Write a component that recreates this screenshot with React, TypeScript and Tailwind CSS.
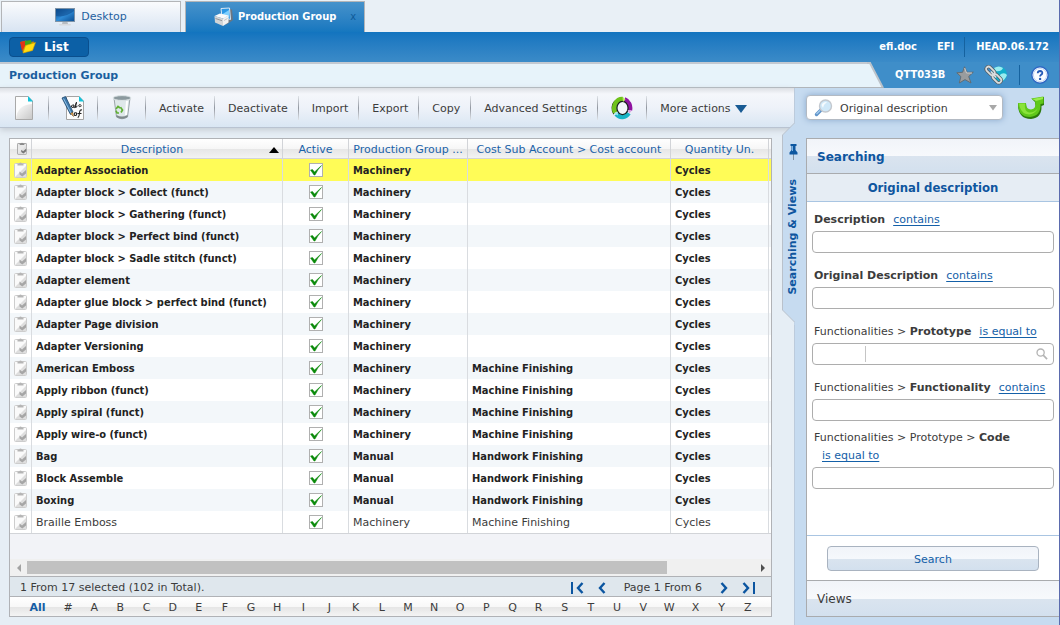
import React from "react";

type Row = { name: string; group: string; account?: string; plain?: boolean };

const rows: Row[] = [
  { name: "Adapter Association", group: "Machinery" },
  { name: "Adapter block > Collect (funct)", group: "Machinery" },
  { name: "Adapter block > Gathering (funct)", group: "Machinery" },
  { name: "Adapter block > Perfect bind (funct)", group: "Machinery" },
  { name: "Adapter block > Sadle stitch (funct)", group: "Machinery" },
  { name: "Adapter element", group: "Machinery" },
  { name: "Adapter glue block > perfect bind (funct)", group: "Machinery" },
  { name: "Adapter Page division", group: "Machinery" },
  { name: "Adapter Versioning", group: "Machinery" },
  { name: "American Emboss", group: "Machinery", account: "Machine Finishing" },
  { name: "Apply ribbon (funct)", group: "Machinery", account: "Machine Finishing" },
  { name: "Apply spiral (funct)", group: "Machinery", account: "Machine Finishing" },
  { name: "Apply wire-o (funct)", group: "Machinery", account: "Machine Finishing" },
  { name: "Bag", group: "Manual", account: "Handwork Finishing" },
  { name: "Block Assemble", group: "Manual", account: "Handwork Finishing" },
  { name: "Boxing", group: "Manual", account: "Handwork Finishing" },
  { name: "Braille Emboss", group: "Machinery", account: "Machine Finishing", plain: true },
];

const letters = "#ABCDEFGHIJKLMNOPQRSTUVWXYZ".split("");

const compact = "font-['DejaVu_Sans_Condensed','Noto_Sans',sans-serif] font-bold";

function MonitorIcon() {
  return (
    <svg width="20" height="18" viewBox="0 0 20 18" aria-hidden="true">
      <defs>
        <linearGradient id="screen" x1="0" y1="0" x2="1" y2="1">
          <stop offset="0" stopColor="#0a4a8c" />
          <stop offset="0.5" stopColor="#2f8bd6" />
          <stop offset="1" stopColor="#0b4d92" />
        </linearGradient>
      </defs>
      <rect x="0.5" y="0.5" width="19" height="13" fill="url(#screen)" stroke="#7d93a8" />
      <path d="M1 8Q10 10 19 3V1H1Z" fill="#0d4788" opacity=".55" />
      <path d="M7.500 14h5l.5 2H7Z" fill="#b7bcc2" />
      <rect x="4" y="16" width="12" height="1.5" rx=".7" fill="#d8dade" />
    </svg>
  );
}

function PrinterIcon() {
  return (
    <svg width="20" height="20" viewBox="0 0 20 20" aria-hidden="true">
      <path d="M14 2L18 2.500L19 13L12 18L13 12Z" fill="#6c7681" />
      <path d="M7 1.500L15.500 1L16.500 12.500L8 10Z" fill="#2c98e6" stroke="#d9e8f4" />
      <path d="M8 7.500L15 3V10.500L9 9Z" fill="#7fd0ff" />
      <path d="M.5 9L6 6.500L14.500 8.500L9 11.500Z" fill="#fafafa" />
      <path d="M.5 9L9 11.500V19L1 15.500Z" fill="#d2d4d6" />
      <path d="M9 11.500L14.500 8.500V15.500L9 19Z" fill="#f1f1f1" />
      <path d="M1.500 11.500L8 13.700" stroke="#8d9194" strokeWidth=".9" />
      <path d="M10 13.500L13.500 11.500" stroke="#b5b8ba" strokeWidth=".8" />
    </svg>
  );
}

function FolderIcon() {
  return (
    <svg width="16" height="14" viewBox="0 0 16 14" aria-hidden="true">
      <path d="M0.500 2L6 0.500L7.500 2.500L14 1.500L13 10L3 13Z" fill="#c98906" />
      <path d="M0 2L5 1V6L2 11Z" fill="#e03316" />
      <path d="M5 1L11 0L12 5L5 7Z" fill="#3fa51d" />
      <path d="M3 13L5.500 5.500L15.500 2.500L12.500 10.500Z" fill="#ffdf12" stroke="#d79f00" strokeWidth=".6" />
    </svg>
  );
}

function NewDocIcon() {
  return (
    <svg width="20" height="26" viewBox="0 0 20 26" aria-hidden="true">
      <defs>
        <linearGradient id="sheet" x1="0" y1="0" x2="1" y2="1">
          <stop offset="0.2" stopColor="#f4f4f4" />
          <stop offset="1" stopColor="#c8c8c8" />
        </linearGradient>
      </defs>
      <path d="M1.500 1.500H14L18.500 6V24.500H1.500Z" fill="#fdfdfd" stroke="#a9a9a9" />
      <path d="M2 24Q3 10 18 9V24Z" fill="url(#sheet)" />
      <path d="M14 1V6.500H19Z" fill="#12c3da" />
    </svg>
  );
}

function EditDocIcon() {
  return (
    <svg width="24" height="26" viewBox="0 0 24 26" aria-hidden="true">
      <path d="M5.500 1.500H18L22.500 6V24.500H5.500Z" fill="#fcfcfc" stroke="#a4a4a4" />
      <path d="M18 1V6.500H23Z" fill="#12c3da" />
      <path d="M12 12.500q-2 0-1.500-1.500t2.500-1l-.5 2.500 1 .2 2-5.500-1.200 5.300q2 0 1.700-1.800m3.700-1q-2-.5-2 1.200t3-.2" fill="none" stroke="#222" strokeWidth="1" />
      <path d="M14.500 20.500q-1.500 0-1.200-1.600t2.200-1q.5 2.500-1 2.600m2.300 2.200q1.500-1 1.700-4.700t2.500-3m-4.500 3.500h4" fill="none" stroke="#222" strokeWidth="1.100" />
      <path d="M1 3L4.500 1.500L12 17L9.500 19.500Z" fill="#3f79ab" stroke="#1c466f" strokeWidth=".8" />
      <path d="M2.500 3.500L10 18" stroke="#8fc0e5" strokeWidth="1" />
      <path d="M9.500 18.500L11.700 17.200L12.500 21.500Z" fill="#e0a757" stroke="#704713" strokeWidth=".5" />
    </svg>
  );
}

function BinIcon() {
  return (
    <svg width="20" height="25" viewBox="0 0 20 25" aria-hidden="true">
      <path d="M2 3L4.500 22Q10 25.500 15.500 22L18 3Z" fill="#dfe8ea" stroke="#9aa5a9" />
      <path d="M4.500 20Q10 23 15.500 20V22Q10 25.500 4.500 22Z" fill="#7f898c" />
      <path d="M15 6L14 20" stroke="#fff" strokeWidth="2" />
      <ellipse cx="10" cy="3" rx="9" ry="2.400" fill="#8b999e" stroke="#dfe6e8" />
      <path d="M4 14L6 11.500L8 13M8.500 12.300L10.500 15L9 17.500M7 18H5L4 15.700" fill="none" stroke="#5fb034" strokeWidth="1.700" />
    </svg>
  );
}

function RingIcon() {
  return (
    <svg width="22" height="24" viewBox="0 0 22 24" aria-hidden="true">
      <path d="M3 18A9 10 0 0 1 4 5" stroke="#1d2a12" strokeWidth="1.500" fill="none" />
      <g fill="none" strokeWidth="4.800">
        <path d="M4.300 16.500A8 9 0 0 1 12 3.300" stroke="#6fc21a" />
        <path d="M13.500 3.600A8 9 0 0 1 18.700 14.500" stroke="#8f12a0" />
        <path d="M17.600 17A8 9 0 0 1 5.300 18" stroke="#18b4c6" />
      </g>
      <ellipse cx="11.500" cy="12" rx="5.600" ry="6.600" fill="#f3f6fb" stroke="#16201c" strokeWidth="1.300" />
      <path d="M11.500 1L14.500 3.500L12 6Z" fill="#b9ec62" />
      <path d="M16.500 14.200L21 14L18.500 17.500Z" fill="#d9a4e0" />
      <path d="M3 17.500L6.500 15.500L7 19.500Z" fill="#a3eaf2" />
    </svg>
  );
}

function StarIcon() {
  return (
    <svg width="18" height="18" viewBox="0 0 18 18" aria-hidden="true">
      <path d="M8.500 .8L11 6.300L17.300 6.200L12.700 10.500L15 17L9 13.600L3.300 17L4.900 10.600L.8 6.800L6.600 6.300Z" fill="#999c9e" stroke="#62696d" strokeWidth=".9" />
      <path d="M8.700 2L10.500 7L16 7" stroke="#c9cbcc" fill="none" />
    </svg>
  );
}

function LinkGlobeIcon() {
  return (
    <svg width="24" height="20" viewBox="0 0 24 20" aria-hidden="true">
      <circle cx="15" cy="9.500" r="8" fill="#12aecb" />
      <path d="M10 3Q15 0 19 3Q17 7 12 6ZM17 9Q21 7 23 10Q21 15 18 16Q18 12 15 11Z" fill="#9aecf0" />
      <g fill="none" stroke="#555d62" strokeWidth="3.200">
        <rect x="1.500" y="3" width="10" height="5" rx="2.500" transform="rotate(45 6 5.500)" />
        <rect x="8" y="11" width="10" height="5" rx="2.500" transform="rotate(45 13 13.500)" />
      </g>
      <g fill="none" stroke="#d9dddf" strokeWidth="1.800">
        <rect x="1.500" y="3" width="10" height="5" rx="2.500" transform="rotate(45 6 5.500)" />
        <rect x="8" y="11" width="10" height="5" rx="2.500" transform="rotate(45 13 13.500)" />
        <path d="M7 6.500L12 12.500" />
      </g>
    </svg>
  );
}

function HelpIcon() {
  return (
    <svg width="18" height="18" viewBox="0 0 18 18" aria-hidden="true">
      <circle cx="9" cy="9" r="8.200" fill="#fafcff" stroke="#2e66c4" strokeWidth="1.400" />
      <circle cx="9" cy="9" r="6.600" fill="#fafcff" stroke="#b9cdee" strokeWidth=".8" />
      <path d="M6.700 7.300Q6.800 5 9.100 5Q11.500 5.100 11.300 7.100Q11.200 8.200 9.900 8.900Q9.100 9.400 9.100 10.600" fill="none" stroke="#2458b5" strokeWidth="1.800" />
      <circle cx="9.100" cy="12.900" r="1.200" fill="#2458b5" />
    </svg>
  );
}

function RefreshIcon() {
  return (
    <svg width="28" height="25" viewBox="0 0 28 25" aria-hidden="true">
      <path d="M1 9Q1 24 14 24Q25 23 24.500 11L27 10V2L15 4L18 7Q20 15 14 16Q9 16 9 9Z" fill="#2c7b0c" />
      <path d="M1 8Q1 22 13 22Q24 21 23.500 9L26.500 8.500V1.500L14 3.500L18 6Q20 14 14 14.500Q9 14.500 9 8Z" fill="#5fc81a" />
      <path d="M2 8.500Q3 17 9 19Q17 21 21 13Q17 18 12 17.500Q7 16 8 8.500Z" fill="#8ae33a" />
      <path d="M15.500 4L26 2V4L19 6Z" fill="#9aec4b" />
    </svg>
  );
}

function LensIcon() {
  return (
    <svg width="19" height="18" viewBox="0 0 19 18" aria-hidden="true">
      <path d="M2.500 15.500L7 11" stroke="#5f93c9" strokeWidth="3.400" strokeLinecap="round" />
      <path d="M2.500 15L6 11.500" stroke="#a6cdee" strokeWidth="1.200" />
      <circle cx="11.500" cy="7" r="6" fill="#cfe8f8" stroke="#c3c8ce" strokeWidth="1.400" />
      <path d="M7.500 6Q9 2.500 13 3Q10 5 9 9Z" fill="#fff" opacity=".8" />
    </svg>
  );
}

function ClipIcon({ small }: { small?: boolean }) {
  return (
    <svg width={small ? 10 : 13} height={small ? 13 : 16} viewBox="0 0 13 16" className="mx-auto block" aria-hidden="true">
      <rect x=".5" y="1.500" width="12" height="14" rx="1" fill={small ? "#e9e9e9" : "#fafafa"} stroke={small ? "#8f8f8f" : "#cdcdcd"} />
      <path d="M1 15L12 4V15Z" fill="#dedede" />
      <path d="M3.500 3.500V1.500H5Q6.500-.5 8 1.500H9.500V3.500Z" fill={small ? "#8a8a8a" : "#b5b5b5"} />
      <path d="M5.500 9.500L8 11.500L12 8V11.500L8.300 14.500L5.500 12.500Z" fill={small ? "#777" : "#a6a6a6"} />
    </svg>
  );
}

function PinIcon() {
  return (
    <svg width="9" height="18" viewBox="0 0 9 18" aria-hidden="true">
      <path d="M4.500 11V17" stroke="#8594a3" />
      <path d="M1.500 1H7.500V3H6.500V7L8.500 9.500V11.500H.5V9.500L2.500 7V3H1.500Z" fill="#0d57a0" />
      <path d="M3.500 3V8" stroke="#7fb4e2" />
    </svg>
  );
}

function PageIcon({ dir, bar }: { dir: "prev" | "next"; bar?: boolean }) {
  return (
    <svg width="14" height="12" viewBox="0 0 14 12" className={dir === "next" ? "rotate-180" : ""} aria-hidden="true">
      {bar && <path d="M2 0V12" stroke="#0b55a0" strokeWidth="2" />}
      <path d="M12.500 1L8 6L12.500 11" fill="none" stroke="#0b55a0" strokeWidth="2.400" />
    </svg>
  );
}

function ToolButton({ children }: { children: React.ReactNode }) {
  return (
    <>
      <button type="button" className="h-6 whitespace-nowrap pt-0.5 pr-2.5 pl-[13px]">{children}</button>
      <Divider />
    </>
  );
}

function Divider() {
  return <span className="h-6 w-px bg-[linear-gradient(#dfe3e8,#9297a0_50%,#dfe3e8)]" />;
}

function Field({ id, path, name, op, lookup }: { id: string; path?: string; name: string; op: string; lookup?: boolean }) {
  return (
    <div>
      <div className="mb-0.5 flex flex-wrap gap-x-2 pt-px pl-0.5 leading-[18px]">
        <label htmlFor={id}>
          {path && <span>{path} &gt; </span>}
          <b>{name}</b>
        </label>
        <a href="#operator" className="text-[#1460a8] underline underline-offset-2">{op}</a>
      </div>
      {lookup ? (
        <div className="flex h-[22px] items-center rounded border border-[#adadad] bg-white pr-[5px]">
          <input id={id} className="h-4 w-[53px] border-r border-[#c5c5c5] px-1 outline-none" />
          <input aria-label={name + " name"} className="h-4 min-w-0 flex-1 px-1 outline-none" />
          <button type="button" aria-label="Look up">
            <svg width="12" height="12" viewBox="0 0 13 13" aria-hidden="true">
              <circle cx="5" cy="5" r="3.900" fill="none" stroke="#b4b4b4" strokeWidth="1.400" />
              <path d="M7.800 7.800L12 12" stroke="#b4b4b4" strokeWidth="1.800" />
            </svg>
          </button>
        </div>
      ) : (
        <input id={id} className="block h-[22px] w-full rounded border border-[#adadad] bg-white px-1 outline-none" />
      )}
    </div>
  );
}

function RowTable() {
  const head = "h-5 truncate border-r border-b border-[#d2d4d8] px-[3px] pt-0.5 pb-0 text-center leading-[17px] font-normal text-[#1a62a8]";
  const cell = "h-[22px] truncate border-r border-[#d9dce0] px-1 pt-0.5 pb-0";
  return (
    <table className="w-full table-fixed border-separate border-spacing-0 leading-[18px]">
      <colgroup>
        <col className="w-[22px]" />
        <col />
        <col className="w-[66px]" />
        <col className="w-[119px]" />
        <col className="w-[203px]" />
        <col className="w-[98px]" />
        <col className="w-0.5" />
      </colgroup>
      <thead className="bg-[linear-gradient(#fff,#f6f6f6_50%,#e6e6e6_50%,#f4f4f4)]">
        <tr>
          <th className="h-5 border-r border-b border-[#d2d4d8] p-0 pl-0.5" aria-label="Record"><ClipIcon small /></th>
          <th className={head}>
            <span className="flex items-center">
              <span className="flex-1">Description</span>
              <svg width="10" height="6" viewBox="0 0 10 6" aria-hidden="true"><path d="M0 6L5 0L10 6Z" fill="#000" /></svg>
            </span>
          </th>
          <th className={head}>Active</th>
          <th className={head}>Production Group ...</th>
          <th className={head}>Cost Sub Account &gt; Cost account</th>
          <th className={head}>Quantity Un.</th>
          <th className="border-b border-[#d2d4d8] p-0" />
        </tr>
      </thead>
      <tbody>
        {rows.map((r, i) => (
          <tr
            key={r.name}
            className={
              (i === 0 ? "bg-[#fffc57] " : i % 2 ? "bg-[#f3f7fa] " : "bg-white ") +
              (r.plain ? "text-[#3c3c3c]" : compact + " text-[#222]")
            }
          >
            <td className="h-[22px] border-r border-[#d9dce0] p-0"><ClipIcon /></td>
            <td className={cell}>{r.name}</td>
            <td className="h-[22px] border-r border-[#d9dce0] p-0">
              <span className="mx-auto grid size-3.5 place-items-center">
                <input
                  type="checkbox"
                  defaultChecked
                  aria-label={r.name + " active"}
                  className="peer col-start-1 row-start-1 size-3.5 appearance-none border border-[#b0b0b0] bg-white"
                />
                <svg width="12" height="12" viewBox="0 0 12 12" className="pointer-events-none invisible col-start-1 row-start-1 peer-checked:visible" aria-hidden="true">
                  <path d="M.5 6L2.500 5.500L4.500 8L11.500 1.500Q8 5 5 11H4Z" fill="#0a8a0a" stroke="#0a8a0a" strokeWidth=".5" />
                </svg>
              </span>
            </td>
            <td className={cell}>{r.group}</td>
            <td className={cell}>{r.account}</td>
            <td className={cell}>Cycles</td>
            <td className="p-0" />
          </tr>
        ))}
      </tbody>
    </table>
  );
}

export default function App() {
  return (
    <div className="flex min-h-screen flex-col border-r border-[#5b6bae] bg-[#e6eef5] font-['DejaVu_Sans',sans-serif] text-[11px] leading-[18px] text-[#3c3c3c]">
      <nav className="flex h-8 items-end gap-1 bg-[#e9f0f6] pl-px">
        <button type="button" className="flex h-[31px] w-[180px] items-center justify-center gap-1.5 border border-b-0 border-[#b3b5b8] bg-linear-to-b from-[#fafbfd] to-[#d8e4f2] text-[#1f5f9f]">
          <MonitorIcon />
          Desktop
        </button>
        <div className={"flex h-[31px] w-[180px] items-center border border-b-0 border-[#b3b5b8] bg-linear-to-b from-[#4592cb] to-[#1577bf] pl-7 text-white " + compact}>
          <button type="button" className="flex items-center gap-1 whitespace-nowrap">
            <PrinterIcon />
            Production Group
          </button>
          <button type="button" aria-label="Close tab" className="ml-auto pr-2 font-normal text-[#0e5a98]">x</button>
        </div>
      </nav>

      <header>
        <div className="flex h-[30px] items-center bg-linear-to-b from-[#1274bf] to-[#3b8bc8] pr-2.5 pl-[9px] text-white">
          <button type="button" className="flex h-5 w-20 items-center gap-2 rounded border border-[#0a4f8e] bg-[#0c60a6] pl-2.5 text-xs font-bold">
            <FolderIcon />
            List
          </button>
          <div className={"ml-auto flex items-center " + compact}>
            <span>efi.doc</span>
            <span className="ml-5">EFI</span>
            <span className="mr-[11px] ml-2.5 h-5 w-px bg-[#15629f]" />
            <span>HEAD.06.172</span>
          </div>
        </div>
        <div className="flex h-[26px] bg-[#3f8ec9]">
          <div className="flex flex-1 items-center border-t-2 border-b border-t-[#c3c9d1] border-b-[#b0b5ba] bg-[#e7f3fa] pl-[9px] font-bold text-[#1b5f9f]">
            Production Group
          </div>
          <svg width="18" height="26" viewBox="0 0 18 26" aria-hidden="true">
            <path d="M0 0H3L16 26H0Z" fill="#e7f3fa" />
            <path d="M0 1H3L16 26" fill="none" stroke="#bcc3ca" strokeWidth="2" />
            <path d="M0 25.500H16" stroke="#b0b5ba" />
          </svg>
          <div className={"flex w-[174px] items-center pl-2.5 text-white " + compact}>
            <span className="w-[61px]">QTT033B</span>
            <button type="button" aria-label="Favourite"><StarIcon /></button>
            <button type="button" aria-label="Copy link" className="ml-2.5"><LinkGlobeIcon /></button>
            <span className="mx-[11px] h-5 w-px bg-[#15629f]" />
            <button type="button" aria-label="Help"><HelpIcon /></button>
          </div>
        </div>
      </header>

      <div className="flex flex-1">
        <main className="flex min-w-0 flex-1 flex-col">
          <div className="flex h-10 items-center border-b border-[#b9c3d1] bg-[linear-gradient(#dcdfe4,#f5f7fb_6px,#eef2f9_50%,#d9e6f3)] shadow-[0_2px_6px_#c3cad2]">
            <button type="button" aria-label="New" className="flex w-12 justify-center"><NewDocIcon /></button>
            <Divider />
            <button type="button" aria-label="Edit" className="flex w-12 justify-center"><EditDocIcon /></button>
            <Divider />
            <button type="button" aria-label="Delete" className="flex w-[47px] justify-center"><BinIcon /></button>
            <Divider />
            <ToolButton>Activate</ToolButton>
            <ToolButton>Deactivate</ToolButton>
            <ToolButton>Import</ToolButton>
            <ToolButton>Export</ToolButton>
            <ToolButton>Copy</ToolButton>
            <ToolButton>Advanced Settings</ToolButton>
            <button type="button" aria-label="Dashboard" className="flex w-12 justify-center"><RingIcon /></button>
            <Divider />
            <button type="button" className="flex h-6 items-center gap-1 pt-0.5 pl-[13px] whitespace-nowrap">
              More actions
              <svg width="12" height="8" viewBox="0 0 12 8" aria-hidden="true"><path d="M0 0H12L6 8Z" fill="#195b94" /></svg>
            </button>
          </div>

          <section className="mt-2.5 mr-[22px] mb-2 ml-[9px] flex flex-1 flex-col border border-[#b0b2b6] bg-[#f2f3f7]">
            <RowTable />
            <div className="flex-1 border-t border-[#d2d4d8]" />
            <div className="flex h-[17px] items-center bg-[#f0f0f0]">
              <button type="button" aria-label="Scroll left" className="flex w-[17px] justify-center">
                <svg width="4" height="8" viewBox="0 0 4 8" aria-hidden="true"><path d="M4 0V8L0 4Z" fill="#a3a3a3" /></svg>
              </button>
              <div className="flex-1"><div className="h-[13px] w-[88%] bg-[#c1c1c1]" /></div>
              <button type="button" aria-label="Scroll right" className="flex w-[17px] justify-center">
                <svg width="4" height="8" viewBox="0 0 4 8" aria-hidden="true"><path d="M0 0V8L4 4Z" fill="#505050" /></svg>
              </button>
            </div>
            <div className="flex h-5 items-center border-t border-[#b0b2b6] bg-[#dfe7ed] pt-0.5 pr-[15px] pl-2.5">
              <span>1 From 17 selected (102 in Total).</span>
              <div className="ml-auto flex items-center">
                <button type="button" aria-label="First page"><PageIcon dir="prev" bar /></button>
                <button type="button" aria-label="Previous page" className="ml-2"><PageIcon dir="prev" /></button>
                <span className="px-[18px]">Page 1 From 6</span>
                <button type="button" aria-label="Next page"><PageIcon dir="next" /></button>
                <button type="button" aria-label="Last page" className="ml-2"><PageIcon dir="next" bar /></button>
              </div>
            </div>
            <div className="flex h-5 items-center border-t border-[#b0b2b6] bg-[linear-gradient(#fff,#f8f8f8_50%,#e4e4e4_50%,#f4f4f4)] pt-0.5 pr-2.5 pl-2.5">
              <button type="button" className="w-[35px] font-bold text-[#155da5]">All</button>
              {letters.map((l) => (
                <button type="button" key={l} className="flex-1">{l}</button>
              ))}
            </div>
          </section>
        </main>

        <aside className="relative flex w-[265px] flex-col border-l border-[#bccbdc] bg-[#c6dbf0] pb-2 pl-[11px]">
          <div className="absolute top-[35px] -left-[13px] flex h-[202px] w-6 flex-col items-center pr-0.5">
            <svg width="24" height="202" viewBox="0 0 24 202" className="absolute inset-0" aria-hidden="true">
              <path d="M24 0H12.500L.5 12V187L12.500 199V202H24Z" fill="#c6dbf0" />
              <path d="M12.500 0L.5 12V187L12.500 199" fill="none" stroke="#b9c1cb" />
            </svg>
            <button type="button" className="relative mt-5 flex flex-col items-center gap-[18px] font-bold text-[#0f569f]">
              <PinIcon />
              <span className="rotate-180 whitespace-nowrap [writing-mode:vertical-rl]">Searching &amp; Views</span>
            </button>
          </div>
          <div className="flex h-[50px] items-start gap-3.5 pt-[7px]">
            <label className="relative block w-[197px]">
              <span className="pointer-events-none absolute top-1 left-2"><LensIcon /></span>
              <select aria-label="Search by" className="h-[25px] w-full appearance-none rounded border border-[#b3bac3] bg-white pt-0.5 pl-[33px] shadow-[0_0_6px_#8aa9cc] outline-none">
                <option>Original description</option>
              </select>
              <svg width="8" height="6" viewBox="0 0 8 6" className="pointer-events-none absolute top-2.5 right-1.5" aria-hidden="true"><path d="M0 0H8L4 5.500Z" fill="#a8a8a8" /></svg>
            </label>
            <button type="button" aria-label="Refresh"><RefreshIcon /></button>
          </div>

          <div className="flex flex-1 flex-col border border-r-0 border-[#a9abae] bg-white">
            <button type="button" className="h-[35px] border-b border-[#a9abae] bg-[linear-gradient(#f1f4f9,#f7f9fc_50%,#dae4ef_50%,#d3e0ee)] pt-0.5 pl-2.5 text-left text-xs font-bold text-[#0f569f]">Searching</button>
            <h2 className={"h-7 border-b border-[#a9c5e2] bg-[#e6edf4] text-center text-[13px] leading-7 text-[#0f569f] " + compact}>Original description</h2>
            <form className="flex flex-1 flex-col" onSubmit={(e) => e.preventDefault()}>
              <div className="flex flex-1 flex-col pt-2 pr-[5px] pl-[5px]">
                <div className="flex flex-col gap-[13px]">
                  <Field id="description" name="Description" op="contains" />
                  <Field id="original" name="Original Description" op="contains" />
                  <Field id="prototype" path="Functionalities" name="Prototype" op="is equal to" lookup />
                  <Field id="functionality" path="Functionalities" name="Functionality" op="contains" />
                </div>
                <div className="mt-[7px]">
                  <div className="mb-0.5 pt-px pl-0.5">
                    <label htmlFor="code" className="block">Functionalities &gt; Prototype &gt; <b>Code</b></label>
                    <a href="#operator" className="ml-2 text-[#1460a8] underline underline-offset-2">is equal to</a>
                  </div>
                  <input id="code" className="block h-[22px] w-full rounded border border-[#adadad] bg-white px-1 outline-none" />
                </div>
              </div>
              <div className="border-t border-[#a9c5e2] px-5 pt-2.5 pb-[9px]">
                <button type="submit" className="block h-[25px] w-full rounded border border-[#a9b3c0] bg-[linear-gradient(#f1f4f9,#f5f8fc_50%,#dae4ef_50%,#d3e0ee)] pt-0.5 text-[#1460a8]">Search</button>
              </div>
            </form>
            <button type="button" className="h-9 border-t border-[#a9abae] bg-[linear-gradient(#f1f4f9,#f7f9fc_50%,#dae4ef_50%,#d3e0ee)] pl-2.5 text-left text-xs">Views</button>
          </div>
        </aside>
      </div>
    </div>
  );
}
